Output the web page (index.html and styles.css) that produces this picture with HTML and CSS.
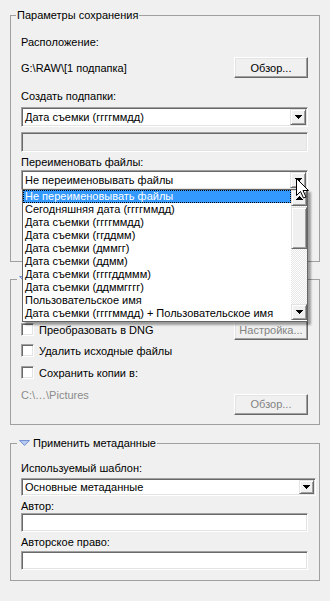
FILE: index.html
```html
<!DOCTYPE html>
<html lang="ru">
<head>
    <meta charset="UTF-8">
    <meta name="viewport" content="width=device-width, initial-scale=1.0">
    <title>Параметры сохранения</title>
    <link rel="stylesheet" href="styles.css">
</head>
<body>

    <div class="panel">

        <!-- Параметры сохранения -->
        <fieldset class="group group-save">
            <legend>Параметры сохранения</legend>

            <div class="label first">Расположение:</div>
            <div class="path-row">
                <span>G:\RAW\[1 подпапка]</span>
                <button type="button" class="btn">Обзор...</button>
            </div>

            <div class="label sub">Создать подпапки:</div>
            <div class="combo">
                <span class="combo-text">Дата съемки (ггггммдд)</span>
                <span class="combo-btn">
                    <svg width="7" height="4" viewBox="0 0 7 4"><path d="M0 0h7v1H0zM1 1h5v1H1zM2 2h3v1H2zM3 3h1v1H3z"/></svg>
                </span>
            </div>
            <div class="field disabled"></div>

            <div class="label">Переименовать файлы:</div>
            <div class="rename">
                <div class="combo flat">
                    <span class="combo-text">Не переименовывать файлы</span>
                    <span class="combo-btn">
                        <svg width="7" height="4" viewBox="0 0 7 4"><path d="M0 0h7v1H0zM1 1h5v1H1zM2 2h3v1H2zM3 3h1v1H3z"/></svg>
                    </span>
                </div>

                <!-- Раскрытый список -->
                <div class="droplist">
                    <ul class="items">
                        <li class="selected">Не переименовывать файлы</li>
                        <li>Сегодняшняя дата (ггггммдд)</li>
                        <li>Дата съемки (ггггммдд)</li>
                        <li>Дата съемки (ггддмм)</li>
                        <li>Дата съемки (дммгг)</li>
                        <li>Дата съемки (ддмм)</li>
                        <li>Дата съемки (ггггддммм)</li>
                        <li>Дата съемки (ддммгггг)</li>
                        <li>Пользовательское имя</li>
                        <li>Дата съемки (ггггммдд) + Пользовательское имя</li>
                    </ul>
                    <div class="scroll">
                        <span class="scroll-btn">
                            <svg width="7" height="4" viewBox="0 0 7 4"><path d="M3 0h1v1H3zM2 1h3v1H2zM1 2h5v1H1zM0 3h7v1H0z"/></svg>
                        </span>
                        <span class="thumb"></span>
                        <span class="scroll-btn down">
                            <svg width="7" height="4" viewBox="0 0 7 4"><path d="M0 0h7v1H0zM1 1h5v1H1zM2 2h3v1H2zM3 3h1v1H3z"/></svg>
                        </span>
                    </div>
                </div>

                <svg class="cursor" width="13" height="21" viewBox="0 0 13 21">
                    <path d="M0.5 0.5V17.5L4.5 13.5L7.5 20L10 19L7 12.5H12.5Z" fill="#fff" stroke="#000" stroke-width="1"/>
                </svg>
            </div>
        </fieldset>

        <!-- Дополнительные параметры (заголовок закрыт списком) -->
        <fieldset class="group group-extra">
            <legend class="toggle">
                <svg class="tri" width="11" height="6" viewBox="0 0 11 6"><path d="M0.5 0.5H10.5L5.5 5.5Z" fill="#b7c8ec" stroke="#7391d4"/></svg>
            </legend>

            <div class="check-row first">
                <span class="box"></span>Преобразовать в DNG
                <button type="button" class="btn off push">Настройка...</button>
            </div>
            <div class="check-row">
                <span class="box"></span>Удалить исходные файлы
            </div>
            <div class="check-row gap">
                <span class="box"></span>Сохранить копии в:
            </div>
            <div class="path-row dim">
                <span>C:\…\Pictures</span>
                <button type="button" class="btn off">Обзор...</button>
            </div>
        </fieldset>

        <!-- Применить метаданные -->
        <fieldset class="group group-meta">
            <legend class="toggle">
                <svg class="tri" width="11" height="6" viewBox="0 0 11 6"><path d="M0.5 0.5H10.5L5.5 5.5Z" fill="#b7c8ec" stroke="#7391d4"/></svg>Применить метаданные
            </legend>

            <div class="label sub">Используемый шаблон:</div>
            <div class="combo short">
                <span class="combo-text">Основные метаданные</span>
                <span class="combo-btn">
                    <svg width="7" height="4" viewBox="0 0 7 4"><path d="M0 0h7v1H0zM1 1h5v1H1zM2 2h3v1H2zM3 3h1v1H3z"/></svg>
                </span>
            </div>

            <div class="label author">Автор:</div>
            <div class="field input"></div>

            <div class="label">Авторское право:</div>
            <div class="field input last"></div>
        </fieldset>

    </div>

</body>
</html>
```

FILE: styles.css
```css
/* Загальні стилі */
body {
    margin: 0;
    width: 330px;
    height: 601px;
    overflow: hidden;
    background-color: #f0f0f0;
    font-family: "Liberation Sans", Arial, sans-serif;
    font-size: 11px;
    color: #000;
}

.panel {
    padding: 0 10px;
}

/* Групи */
.group {
    margin: 0;
    min-width: 0;
    border: 1px solid #a0a0a0;
    padding: 0 11px 0 10px;
}

.group legend {
    padding: 0 1px;
    line-height: 13px;
    margin-left: -5px;
}

.group legend.toggle {
    margin-left: -4px;
    padding: 0 1px 0 2px;
}

.tri {
    margin-right: 3px;
    vertical-align: 1px;
}

.group-save {
    margin-top: 9px;
}

.group-extra {
    margin-top: 11px;
    padding-bottom: 9px;
}

.group-meta {
    margin-top: 12px;
    padding-bottom: 10px;
}

/* Підписи */
.label {
    line-height: 13px;
    margin-top: 4px;
}

.label.first {
    margin-top: 14px;
}

.label.sub {
    margin-top: 12px;
}

.label.author {
    margin-top: 4px;
}

/* Рядок шляху з кнопкою */
.path-row {
    display: flex;
    justify-content: space-between;
    align-items: center;
    height: 21px;
    margin-top: 8px;
}

.path-row.dim {
    align-items: flex-start;
    height: 26px;
    margin-top: 6px;
    line-height: 13px;
    color: #8b8b8b;
}

.path-row.dim .btn {
    margin-top: 5px;
}

/* Кнопки */
.btn {
    width: 74px;
    height: 21px;
    padding: 0;
    font: inherit;
    color: #000;
    background-color: #f0f0f0;
    border: 1px solid;
    border-color: #fff #696969 #696969 #fff;
    box-shadow: inset -1px -1px #a0a0a0, inset 1px 1px #e3e3e3;
}

.btn.off {
    color: #838383;
}

.btn.push {
    margin-left: auto;
}

/* Випадаючі списки */
.combo {
    box-sizing: border-box;
    display: flex;
    align-items: center;
    height: 20px;
    margin-top: 4px;
    padding: 1px 1px 1px 3px;
    background-color: #fff;
    border: 1px solid;
    border-color: #a0a0a0 #fff #fff #a0a0a0;
    box-shadow: inset 1px 1px #696969, inset -1px -1px #e3e3e3;
}

.combo.flat {
    margin-top: 0;
}

.combo.short {
    height: 18px;
    margin-top: 3px;
    margin-right: -8px;
}

.combo-text {
    flex: 1;
    white-space: nowrap;
}

.combo-btn,
.scroll-btn {
    box-sizing: border-box;
    display: flex;
    align-items: center;
    justify-content: center;
    width: 16px;
    height: 16px;
    background-color: #f0f0f0;
    border: 1px solid;
    border-color: #e3e3e3 #696969 #696969 #e3e3e3;
    box-shadow: inset 1px 1px #fff, inset -1px -1px #a0a0a0;
}

.combo.short .combo-btn {
    width: 15px;
    height: 14px;
}

.combo-btn svg,
.scroll-btn svg {
    shape-rendering: crispEdges;
}

/* Поля введення */
.field {
    box-sizing: border-box;
    height: 20px;
    border: 1px solid;
    border-color: #a0a0a0 #fff #fff #a0a0a0;
    box-shadow: inset 1px 1px #696969, inset -1px -1px #e3e3e3;
}

.field.disabled {
    margin-top: 5px;
    background-color: #ececec;
}

.field.input {
    height: 19px;
    background-color: #fff;
}

.field.input.last {
    margin-top: 2px;
}

/* Розкритий список перейменування */
.rename {
    position: relative;
    margin-top: 1px;
    margin-bottom: 71px;
}

.droplist {
    position: absolute;
    left: 1px;
    top: 19px;
    z-index: 2;
    box-sizing: border-box;
    width: 286px;
    display: flex;
    padding-bottom: 1px;
    background-color: #fff;
    border: 1px solid #646464;
    box-shadow: 3px 3px 2px rgba(0, 0, 0, 0.35);
}

.items {
    flex: 1;
    margin: 0;
    padding: 0;
    list-style: none;
}

.items li {
    height: 13px;
    line-height: 13px;
    padding-left: 2px;
    white-space: nowrap;
}

.items li.selected {
    background-color: #3399ff;
    color: #fff;
    outline: 1px dotted #000;
    outline-offset: -1px;
}

.scroll {
    display: flex;
    flex-direction: column;
    width: 16px;
    background: repeating-conic-gradient(#fff 0 25%, #e6e6e6 0 50%) 0 0 / 2px 2px;
}

.thumb {
    box-sizing: border-box;
    height: 42px;
    margin-top: 1px;
    background-color: #f0f0f0;
    border: 1px solid;
    border-color: #e3e3e3 #696969 #696969 #e3e3e3;
    box-shadow: inset 1px 1px #fff, inset -1px -1px #a0a0a0;
}

.scroll-btn.down {
    margin-top: auto;
}

.cursor {
    position: absolute;
    left: 275px;
    top: 8px;
    z-index: 3;
}

/* Прапорці */
.check-row {
    display: flex;
    align-items: center;
    height: 21px;
    white-space: nowrap;
}

.check-row.first {
    margin-top: 33px;
}

.check-row.gap {
    margin-top: 1px;
}

.box {
    box-sizing: border-box;
    width: 13px;
    height: 13px;
    margin-right: 5px;
    background-color: #fff;
    border: 1px solid;
    border-color: #a0a0a0 #fff #fff #a0a0a0;
    box-shadow: inset 1px 1px #696969, inset -1px -1px #e3e3e3;
}
```
